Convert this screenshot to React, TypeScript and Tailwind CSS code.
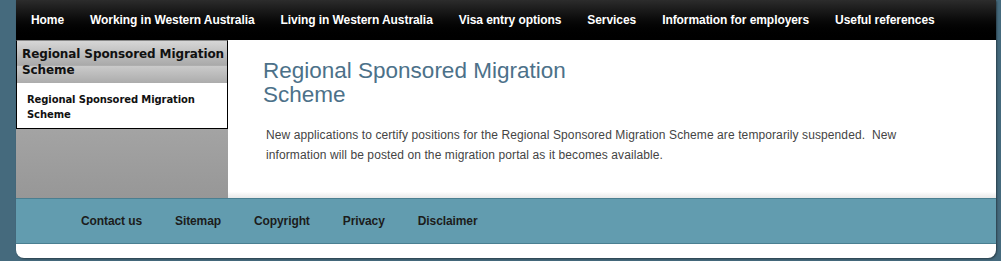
const navItems = [
  "Home",
  "Working in Western Australia",
  "Living in Western Australia",
  "Visa entry options",
  "Services",
  "Information for employers",
  "Useful references",
];

const footerLinks = ["Contact us", "Sitemap", "Copyright", "Privacy", "Disclaimer"];

export default function App() {
  return (
    <div className="h-[261px] w-[1001px] overflow-hidden bg-[#456a7d] pl-4 pr-[5px] font-['Liberation_Sans',Arial,sans-serif]">
      <div className="flex h-[258px] flex-col overflow-hidden rounded-b-[8px] bg-white shadow-[1px_1px_2px_rgba(0,0,0,0.4)]">
        {/* top nav */}
        <nav className="flex h-10 shrink-0 items-center bg-gradient-to-b from-[#2c2c2c] to-[#000] pl-[2px]">
          {navItems.map((item) => (
            <a
              key={item}
              className="px-[13px] text-[12px] font-bold leading-none tracking-[-0.07px] text-white"
            >
              {item}
            </a>
          ))}
        </nav>

        <div className="flex h-[158px] shrink-0">
          {/* sidebar */}
          <aside className="flex w-[212px] shrink-0 flex-col bg-gradient-to-b from-[#b4b4b4] to-[#979797]">
            <div className="border border-black border-t-[#888] font-['DejaVu_Sans',Verdana,sans-serif]">
              <div className="h-[42px] bg-[linear-gradient(to_bottom,#d6d6d6_0%,#a9a9a9_58%,#cacaca_60%,#acacac_100%)] pl-[5px] pt-[5px] text-[12px] font-bold leading-[16px] tracking-[-0.1px] text-[#111]">
                Regional Sponsored Migration Scheme
              </div>
              <div className="h-[45px] bg-white px-[10px] pt-[9px] text-[10px] font-bold leading-[15px] tracking-[-0.1px] text-[#111]">
                Regional Sponsored Migration Scheme
              </div>
            </div>
          </aside>

          {/* main */}
          <main className="flex-1 bg-[linear-gradient(to_bottom,#fff_0%,#fff_96%,#e8e8e8_100%)] pl-[35px] pt-[19px]">
            <h1 className="w-[340px] text-[22.5px] leading-[24px] text-[#4c7189]">
              Regional Sponsored Migration Scheme
            </h1>
            <p className="mt-[18px] w-[660px] pl-[3px] text-[12px] leading-[20px] tracking-[0.1px] text-[#444]">
              New applications to certify positions for the Regional Sponsored Migration Scheme are temporarily suspended.&nbsp; New information will be posted on the migration portal as it becomes available.
            </p>
          </main>
        </div>

        {/* footer */}
        <footer className="flex h-[46px] shrink-0 items-center gap-[33px] border-y border-[#4a7f91] bg-[#629caf] pl-[65px]">
          {footerLinks.map((link) => (
            <a key={link} className="text-[12px] font-bold tracking-[-0.1px] text-[#1c1c1c]">
              {link}
            </a>
          ))}
        </footer>
      </div>
    </div>
  );
}
